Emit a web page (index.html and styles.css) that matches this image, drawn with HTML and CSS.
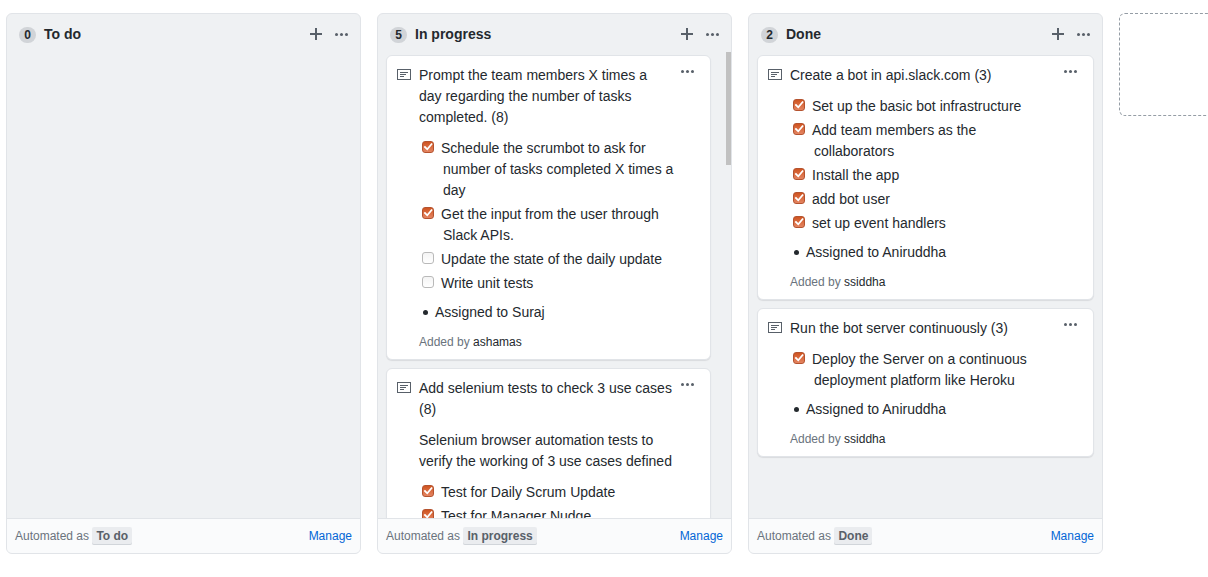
FILE: index.html
```html
<!DOCTYPE html>
<html lang="en">
<head>
<meta charset="utf-8">
<title>Project board</title>
<link rel="stylesheet" href="styles.css">
</head>
<body>
<svg class="sprite" aria-hidden="true">
  <symbol id="plus" viewBox="0 0 12 12"><path d="M5 0h2v5h5v2H7v5H5V7H0V5h5z"/></symbol>
  <symbol id="dots" viewBox="0 0 13 3"><circle cx="1.5" cy="1.5" r="1.5"/><circle cx="6.5" cy="1.5" r="1.5"/><circle cx="11.5" cy="1.5" r="1.5"/></symbol>
  <symbol id="note" viewBox="0 0 14 11"><path fill-rule="evenodd" d="M0 0h14v11H0zM1 1v9h12V1zM3 3h8v1H3zM3 5h6v1H3zM3 7h4v1H3z"/></symbol>
</svg>
<main class="board">
  <section class="column">
    <header class="column-header">
      <span class="counter">0</span>
      <h2 class="column-title">To do</h2>
      <button class="icon-button" type="button" aria-label="Add a note to To do"><svg class="icon-plus"><use href="#plus"/></svg></button>
      <button class="icon-button" type="button" aria-label="To do menu"><svg class="icon-dots"><use href="#dots"/></svg></button>
    </header>
    <div class="column-body"></div>
    <footer class="column-footer">
      <span>Automated as <strong class="tag">To do</strong></span>
      <a class="manage" href="#manage">Manage</a>
    </footer>
  </section>

  <section class="column">
    <header class="column-header">
      <span class="counter">5</span>
      <h2 class="column-title">In progress</h2>
      <button class="icon-button" type="button" aria-label="Add a note to In progress"><svg class="icon-plus"><use href="#plus"/></svg></button>
      <button class="icon-button" type="button" aria-label="In progress menu"><svg class="icon-dots"><use href="#dots"/></svg></button>
    </header>
    <div class="column-body">
      <div class="cards">
        <article class="card">
          <svg class="icon-note"><use href="#note"/></svg>
          <div class="card-content">
            <p>Prompt the team members X times a<br>day regarding the number of tasks<br>completed. (8)</p>
            <ul class="tasks">
              <li><label><input type="checkbox" checked>Schedule the scrumbot to ask for number of tasks completed X times a day</label></li>
              <li><label><input type="checkbox" checked>Get the input from the user through Slack APIs.</label></li>
              <li><label><input type="checkbox">Update the state of the daily update</label></li>
              <li><label><input type="checkbox">Write unit tests</label></li>
            </ul>
            <ul class="bullets"><li>Assigned to Suraj</li></ul>
            <small class="author">Added by <a href="#ashamas">ashamas</a></small>
          </div>
          <button class="icon-button card-menu" type="button" aria-label="Card menu"><svg class="icon-dots"><use href="#dots"/></svg></button>
        </article>
        <article class="card">
          <svg class="icon-note"><use href="#note"/></svg>
          <div class="card-content">
            <p>Add selenium tests to check 3 use cases (8)</p>
            <p>Selenium browser automation tests to verify the working of 3 use cases defined</p>
            <ul class="tasks">
              <li><label><input type="checkbox" checked>Test for Daily Scrum Update</label></li>
              <li><label><input type="checkbox" checked>Test for Manager Nudge</label></li>
            </ul>
          </div>
          <button class="icon-button card-menu" type="button" aria-label="Card menu"><svg class="icon-dots"><use href="#dots"/></svg></button>
        </article>
      </div>
      <div class="scroll-track"><div class="scroll-thumb"></div></div>
    </div>
    <footer class="column-footer">
      <span>Automated as <strong class="tag">In progress</strong></span>
      <a class="manage" href="#manage">Manage</a>
    </footer>
  </section>

  <section class="column">
    <header class="column-header">
      <span class="counter">2</span>
      <h2 class="column-title">Done</h2>
      <button class="icon-button" type="button" aria-label="Add a note to Done"><svg class="icon-plus"><use href="#plus"/></svg></button>
      <button class="icon-button" type="button" aria-label="Done menu"><svg class="icon-dots"><use href="#dots"/></svg></button>
    </header>
    <div class="column-body">
      <div class="cards">
        <article class="card">
          <svg class="icon-note"><use href="#note"/></svg>
          <div class="card-content">
            <p>Create a bot in api.slack.com (3)</p>
            <ul class="tasks">
              <li><label><input type="checkbox" checked>Set up the basic bot infrastructure</label></li>
              <li><label><input type="checkbox" checked>Add team members as the<br>collaborators</label></li>
              <li><label><input type="checkbox" checked>Install the app</label></li>
              <li><label><input type="checkbox" checked>add bot user</label></li>
              <li><label><input type="checkbox" checked>set up event handlers</label></li>
            </ul>
            <ul class="bullets"><li>Assigned to Aniruddha</li></ul>
            <small class="author">Added by <a href="#ssiddha">ssiddha</a></small>
          </div>
          <button class="icon-button card-menu" type="button" aria-label="Card menu"><svg class="icon-dots"><use href="#dots"/></svg></button>
        </article>
        <article class="card">
          <svg class="icon-note"><use href="#note"/></svg>
          <div class="card-content">
            <p>Run the bot server continuously (3)</p>
            <ul class="tasks">
              <li><label><input type="checkbox" checked>Deploy the Server on a continuous deployment platform like Heroku</label></li>
            </ul>
            <ul class="bullets"><li>Assigned to Aniruddha</li></ul>
            <small class="author">Added by <a href="#ssiddha">ssiddha</a></small>
          </div>
          <button class="icon-button card-menu" type="button" aria-label="Card menu"><svg class="icon-dots"><use href="#dots"/></svg></button>
        </article>
      </div>
    </div>
    <footer class="column-footer">
      <span>Automated as <strong class="tag">Done</strong></span>
      <a class="manage" href="#manage">Manage</a>
    </footer>
  </section>

  <div class="new-column"></div>
</main>
</body>
</html>
```

FILE: styles.css
```css
* { box-sizing: border-box; }

body {
  margin: 0;
  background: #fff;
  color: #24292e;
  font: 14px/21px "Liberation Sans", Arial, sans-serif;
}

p, h2, ul { margin: 0; padding: 0; }

a { color: inherit; text-decoration: none; }

svg { display: block; flex: none; fill: #586069; }

.sprite { position: absolute; width: 0; height: 0; }

.icon-plus { width: 12px; height: 12px; }
.icon-dots { width: 13px; height: 3px; }
.icon-note { width: 14px; height: 11px; margin-top: 4px; }

.icon-button {
  display: flex;
  align-items: center;
  flex: none;
  padding: 0;
  border: 0;
  background: none;
  cursor: pointer;
}

.board {
  display: flex;
  gap: 16px;
  height: 100vh;
  padding: 13px 0 23px 6px;
  overflow: hidden;
}

.column {
  display: flex;
  flex: 0 0 355px;
  flex-direction: column;
  border: 1px solid #e1e4e8;
  border-radius: 6px;
  background: #eff1f3;
  overflow: hidden;
}

.column-header {
  display: flex;
  align-items: center;
  flex: none;
  height: 38px;
  padding: 2px 12px 0;
}

.column-header .icon-button + .icon-button { margin-left: 13px; }

.counter {
  min-width: 17px;
  margin: 2px 8px 0 0;
  border-radius: 8px;
  background: #d1d4d8;
  font-size: 12px;
  font-weight: 600;
  line-height: 16px;
  text-align: center;
}

.column-title {
  flex: 1;
  font-size: 14px;
  font-weight: 600;
  line-height: 20px;
}

.column-body {
  display: flex;
  flex: 1;
  min-height: 0;
  overflow: hidden;
}

.cards { flex: 1; min-width: 0; padding: 3px 8px 0; }

.scroll-track { display: flex; justify-content: flex-end; flex: 0 0 12px; }

.scroll-thumb { width: 5px; height: 113px; background: #c1c1c1; }

.card {
  display: flex;
  align-items: flex-start;
  margin-bottom: 8px;
  padding: 9px 16px 8px 10px;
  border: 1px solid #e1e4e8;
  border-radius: 6px;
  background: #fff;
  box-shadow: 0 1px 1px rgba(27, 31, 35, 0.1);
}

.card-content { flex: 1; min-width: 0; margin: 0 2px 0 8px; }

.card-content p { margin-bottom: 10px; }

.card-menu { margin-top: 5px; }

.tasks { margin-bottom: 8px; padding-left: 24px; list-style: none; }

.tasks li + li { margin-top: 3px; }

.tasks input {
  appearance: none;
  position: relative;
  width: 12px;
  height: 12px;
  margin: 0 7px 0 -21px;
  border: 1px solid #b9b9b9;
  border-radius: 3px;
  background: linear-gradient(#f4f4f4, #fff);
  vertical-align: 0;
}

.tasks input:checked {
  border-color: #b5532f;
  background: linear-gradient(#cf5420, #e48562);
}

.tasks input:checked::after {
  content: "";
  position: absolute;
  inset: 0;
  background: #fff;
  clip-path: polygon(6% 50%, 20% 38%, 42% 60%, 84% 10%, 98% 20%, 43% 86%);
}

.bullets { margin-bottom: 10px; padding-left: 4px; list-style: none; }

.bullets li { display: flex; align-items: center; gap: 7px; }

.bullets li::before {
  content: "";
  width: 5px;
  height: 5px;
  border-radius: 50%;
  background: #24292e;
}

.author { display: block; color: #6a737d; font-size: 12px; line-height: 18px; }

.author a { color: #24292e; }

.column-footer {
  display: flex;
  align-items: center;
  justify-content: space-between;
  flex: none;
  height: 35px;
  padding: 0 8px;
  border-top: 1px solid #e1e4e8;
  background: #fafbfc;
  color: #6a737d;
  font-size: 12px;
  line-height: 18px;
}

.tag {
  display: inline-block;
  padding: 0 4px;
  border-radius: 2px;
  background: #eaecef;
  box-shadow: inset 0 -1px 0 #d1d5da;
  color: #586069;
  font-weight: 600;
}

.manage { color: #0366d6; }

.new-column {
  flex: 0 0 355px;
  height: 103px;
  border: 1px dashed #959da5;
  border-radius: 6px;
}
```
